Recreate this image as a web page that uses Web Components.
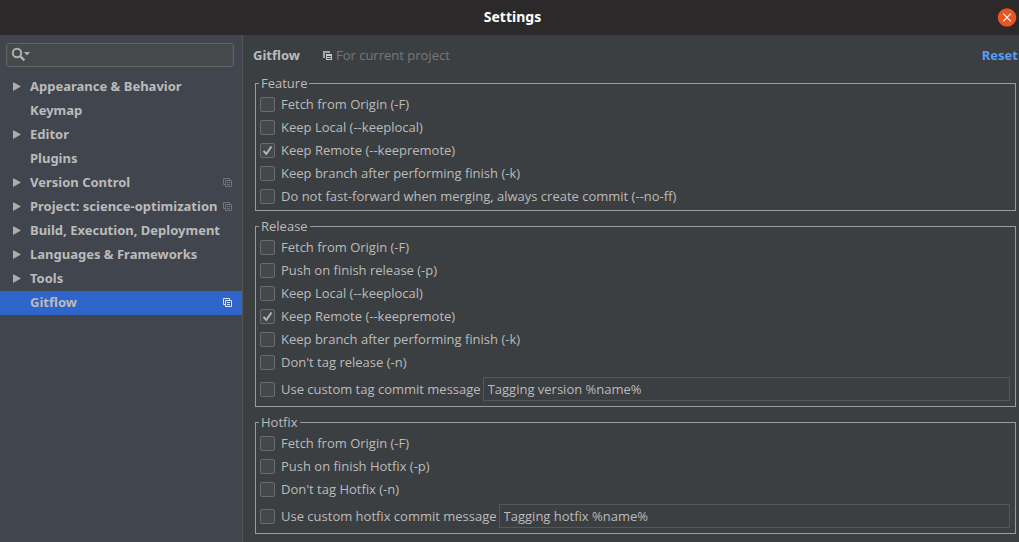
<!DOCTYPE html>
<html lang="en">
<head>
<meta charset="utf-8">
<title>Settings</title>
<style>
  html, body { height: 100%; margin: 0; background: #2c292a; }
  body { font: 13px/16px "Open Sans", "Noto Sans", sans-serif; color: #bbbbbb; }
</style>
</head>
<body>
<settings-window heading="Settings">
  <settings-sidebar slot="sidebar">
    <tree-item expandable>Appearance &amp; Behavior</tree-item>
    <tree-item>Keymap</tree-item>
    <tree-item expandable>Editor</tree-item>
    <tree-item>Plugins</tree-item>
    <tree-item expandable project>Version Control</tree-item>
    <tree-item expandable project>Project: science-optimization</tree-item>
    <tree-item expandable>Build, Execution, Deployment</tree-item>
    <tree-item expandable>Languages &amp; Frameworks</tree-item>
    <tree-item expandable>Tools</tree-item>
    <tree-item project selected>Gitflow</tree-item>
  </settings-sidebar>
  <settings-page heading="Gitflow" note="For current project">
    <option-group heading="Feature">
      <check-option>Fetch from Origin (-F)</check-option>
      <check-option>Keep Local (--keeplocal)</check-option>
      <check-option checked>Keep Remote (--keepremote)</check-option>
      <check-option>Keep branch after performing finish (-k)</check-option>
      <check-option>Do not fast-forward when merging, always create commit (--no-ff)</check-option>
    </option-group>
    <option-group heading="Release">
      <check-option>Fetch from Origin (-F)</check-option>
      <check-option>Push on finish release (-p)</check-option>
      <check-option>Keep Local (--keeplocal)</check-option>
      <check-option checked>Keep Remote (--keepremote)</check-option>
      <check-option>Keep branch after performing finish (-k)</check-option>
      <check-option>Don't tag release (-n)</check-option>
      <message-option value="Tagging version %name%">Use custom tag commit message</message-option>
    </option-group>
    <option-group heading="Hotfix">
      <check-option>Fetch from Origin (-F)</check-option>
      <check-option>Push on finish Hotfix (-p)</check-option>
      <check-option>Don't tag Hotfix (-n)</check-option>
      <message-option value="Tagging hotfix %name%">Use custom hotfix commit message</message-option>
    </option-group>
  </settings-page>
</settings-window>

<script>
class BaseElement extends HTMLElement {
  constructor() {
    super();
    this.attachShadow({ mode: "open" });
  }
  connectedCallback() {
    this.shadowRoot.innerHTML = this.render();
  }
}

customElements.define("settings-window", class extends BaseElement {
  render() {
    return `
      <style>
        :host { display: flex; flex-direction: column; min-height: 100vh; box-sizing: border-box; border-bottom: 1px solid #352f3a; }
        header { display: grid; grid-template-columns: 1fr auto 1fr; align-items: center; height: 35px; background: #2c292a; padding: 0 2px 0 8px; box-sizing: border-box; }
        h1 { margin: 0; padding-bottom: 2px; font: bold 14px/20px "Noto Sans", sans-serif; color: #fff; grid-column: 2; }
        button { justify-self: end; padding: 0; border: 0; background: none; width: 20px; height: 20px; }
        svg { display: block; }
        main { flex: 1; display: flex; background: #3c3f41; }
        ::slotted([slot=sidebar]) { flex: none; }
        slot:not([name]) { display: flex; flex: 1; min-width: 0; }
        ::slotted(settings-page) { flex: 1; min-width: 0; }
      </style>
      <header>
        <h1>${this.getAttribute("heading")}</h1>
        <button type="button" aria-label="Close">
          <svg width="20" height="20" viewBox="0 0 20 20">
            <circle cx="10" cy="9.500" r="9.3" fill="#e95420"/>
            <path d="M6.200 5.700l7.600 7.600M13.800 5.700l-7.600 7.600" stroke="#fff" stroke-width="1.2"/>
          </svg>
        </button>
      </header>
      <main><slot name="sidebar"></slot><slot></slot></main>`;
  }
});

customElements.define("settings-sidebar", class extends BaseElement {
  render() {
    return `
      <style>
        :host { display: block; width: 242px; background: #41454e; border-right: 1px solid #555555; }
        .search { position: relative; margin: 8px 8px 8px 6px; }
        input { display: block; width: 100%; height: 24px; box-sizing: border-box; padding: 0 6px 0 28px; border: 1px solid #646464; border-radius: 3px; background: #45494a; color: inherit; font: inherit; outline: 0; }
        svg { position: absolute; left: 5px; top: 4px; }
        nav { display: block; }
      </style>
      <div class="search">
        <input type="search" aria-label="Search settings">
        <svg width="20" height="16" viewBox="0 0 20 16" aria-hidden="true">
          <circle cx="6" cy="6" r="4.2" fill="none" stroke="#afb1b3" stroke-width="2"/>
          <path d="M9 9l4.400 4.400" stroke="#afb1b3" stroke-width="2.4"/>
          <path d="M13 5h6l-3 3.600z" fill="#afb1b3"/>
        </svg>
      </div>
      <nav aria-label="Settings sections"><slot></slot></nav>`;
  }
});

customElements.define("tree-item", class extends BaseElement {
  render() {
    const arrow = this.hasAttribute("expandable")
      ? `<svg width="8" height="10" viewBox="0 0 8 10"><path d="M0 0l8 4.500-8 4.500z" fill="#adadad"/></svg>` : "";
    const badge = this.hasAttribute("project")
      ? `<svg class="badge" width="9" height="10" viewBox="0 0 9 10"><path d="M2 6.500H.5v-6h6V2M2.500 2.500h6v6h-6zM4 4.500h3M4 6.500h3" fill="none" stroke="currentColor"/></svg>` : "";
    return `
      <style>
        :host { display: block; }
        a { display: grid; grid-template-columns: 17px 1fr auto; align-items: center; height: 24px; padding: 0 10px 0 13px; color: inherit; font-family: "Noto Sans", sans-serif; font-weight: bold; text-decoration: none; white-space: nowrap; }
        .text { min-width: 0; padding-bottom: 2px; }
        svg { display: block; }
        .badge { color: #70747a; }
        :host([selected]) { background: #2f65ca; }
        :host([selected]) .badge { color: #dde4f2; }
      </style>
      <a href="#"><span>${arrow}</span><span class="text"><slot></slot></span>${badge}</a>`;
  }
});

customElements.define("settings-page", class extends BaseElement {
  render() {
    return `
      <style>
        :host { display: block; padding: 8px 3px 8px 12px; }
        header { display: flex; align-items: center; height: 24px; padding-bottom: 8px; }
        h2 { margin: 0 23px 0 -2px; font: bold 13px/16px "Noto Sans", sans-serif; }
        .note { display: flex; align-items: center; gap: 4px; flex: 1; color: #787878; }
        a { margin-right: -2px; color: #589df6; font-family: "Noto Sans", sans-serif; font-weight: bold; text-decoration: none; }
        .groups { display: flex; flex-direction: column; gap: 7px; }
      </style>
      <header>
        <h2>${this.getAttribute("heading")}</h2>
        <span class="note">
          <svg width="9" height="10" viewBox="0 -1 9 10" aria-hidden="true"><path d="M0 0h7v2H2v5H0z" fill="#9aa7b0"/><path d="M3 3h6v6H3z" fill="#c5c8ca"/><path d="M4 5.500h4M4 7.500h4" stroke="#3c3f41"/></svg>
          ${this.getAttribute("note")}
        </span>
        <a href="#">Reset</a>
      </header>
      <div class="groups"><slot></slot></div>`;
  }
});

customElements.define("option-group", class extends BaseElement {
  render() {
    return `
      <style>
        :host { display: block; }
        fieldset { margin: 0; min-width: 0; padding: 2px 5px 2px 4px; border: 1px solid #999b9c; }
        legend { margin: 0 0 0 -1px; padding: 0 2px; height: 16px; }
      </style>
      <fieldset><legend>${this.getAttribute("heading")}</legend><slot></slot></fieldset>`;
  }
});

const checkStyles = `
  label { display: flex; align-items: center; gap: 6px; height: 23px; white-space: nowrap; }
  .text { padding-bottom: 1px; }
  input[type=checkbox] { appearance: none; flex: none; margin: 0; width: 15px; height: 15px; border: 1px solid #6b6b6b; border-radius: 2px; background: #43494a; }
  .box { display: grid; flex: none; }
  .box > * { grid-area: 1 / 1; }
  svg { display: none; pointer-events: none; }
  input:checked + svg { display: block; }`;
const checkBox = checked => `
  <span class="box"><input type="checkbox"${checked ? " checked" : ""}>
    <svg width="15" height="15" viewBox="0 0 15 15" aria-hidden="true"><path d="M3.500 7.800l2.800 3.200L11.500 3.500" fill="none" stroke="#b4b6b7" stroke-width="2"/></svg>
  </span>`;

customElements.define("check-option", class extends BaseElement {
  render() {
    return `
      <style>:host { display: block; } ${checkStyles}</style>
      <label>${checkBox(this.hasAttribute("checked"))}<span class="text"><slot></slot></span></label>`;
  }
});

customElements.define("message-option", class extends BaseElement {
  render() {
    return `
      <style>
        :host { display: flex; align-items: center; gap: 2px; padding: 3px 0; }
        ${checkStyles}
        input[type=text] { flex: 1; min-width: 0; height: 24px; box-sizing: border-box; padding: 0 4px; border: 1px solid #555758; background: transparent; color: inherit; font: inherit; outline: 0; }
      </style>
      <label>${checkBox(false)}<span class="text"><slot></slot></span></label>
      <input type="text" aria-label="${this.textContent}" value="${this.getAttribute("value")}">`;
  }
});
</script>
</body>
</html>
